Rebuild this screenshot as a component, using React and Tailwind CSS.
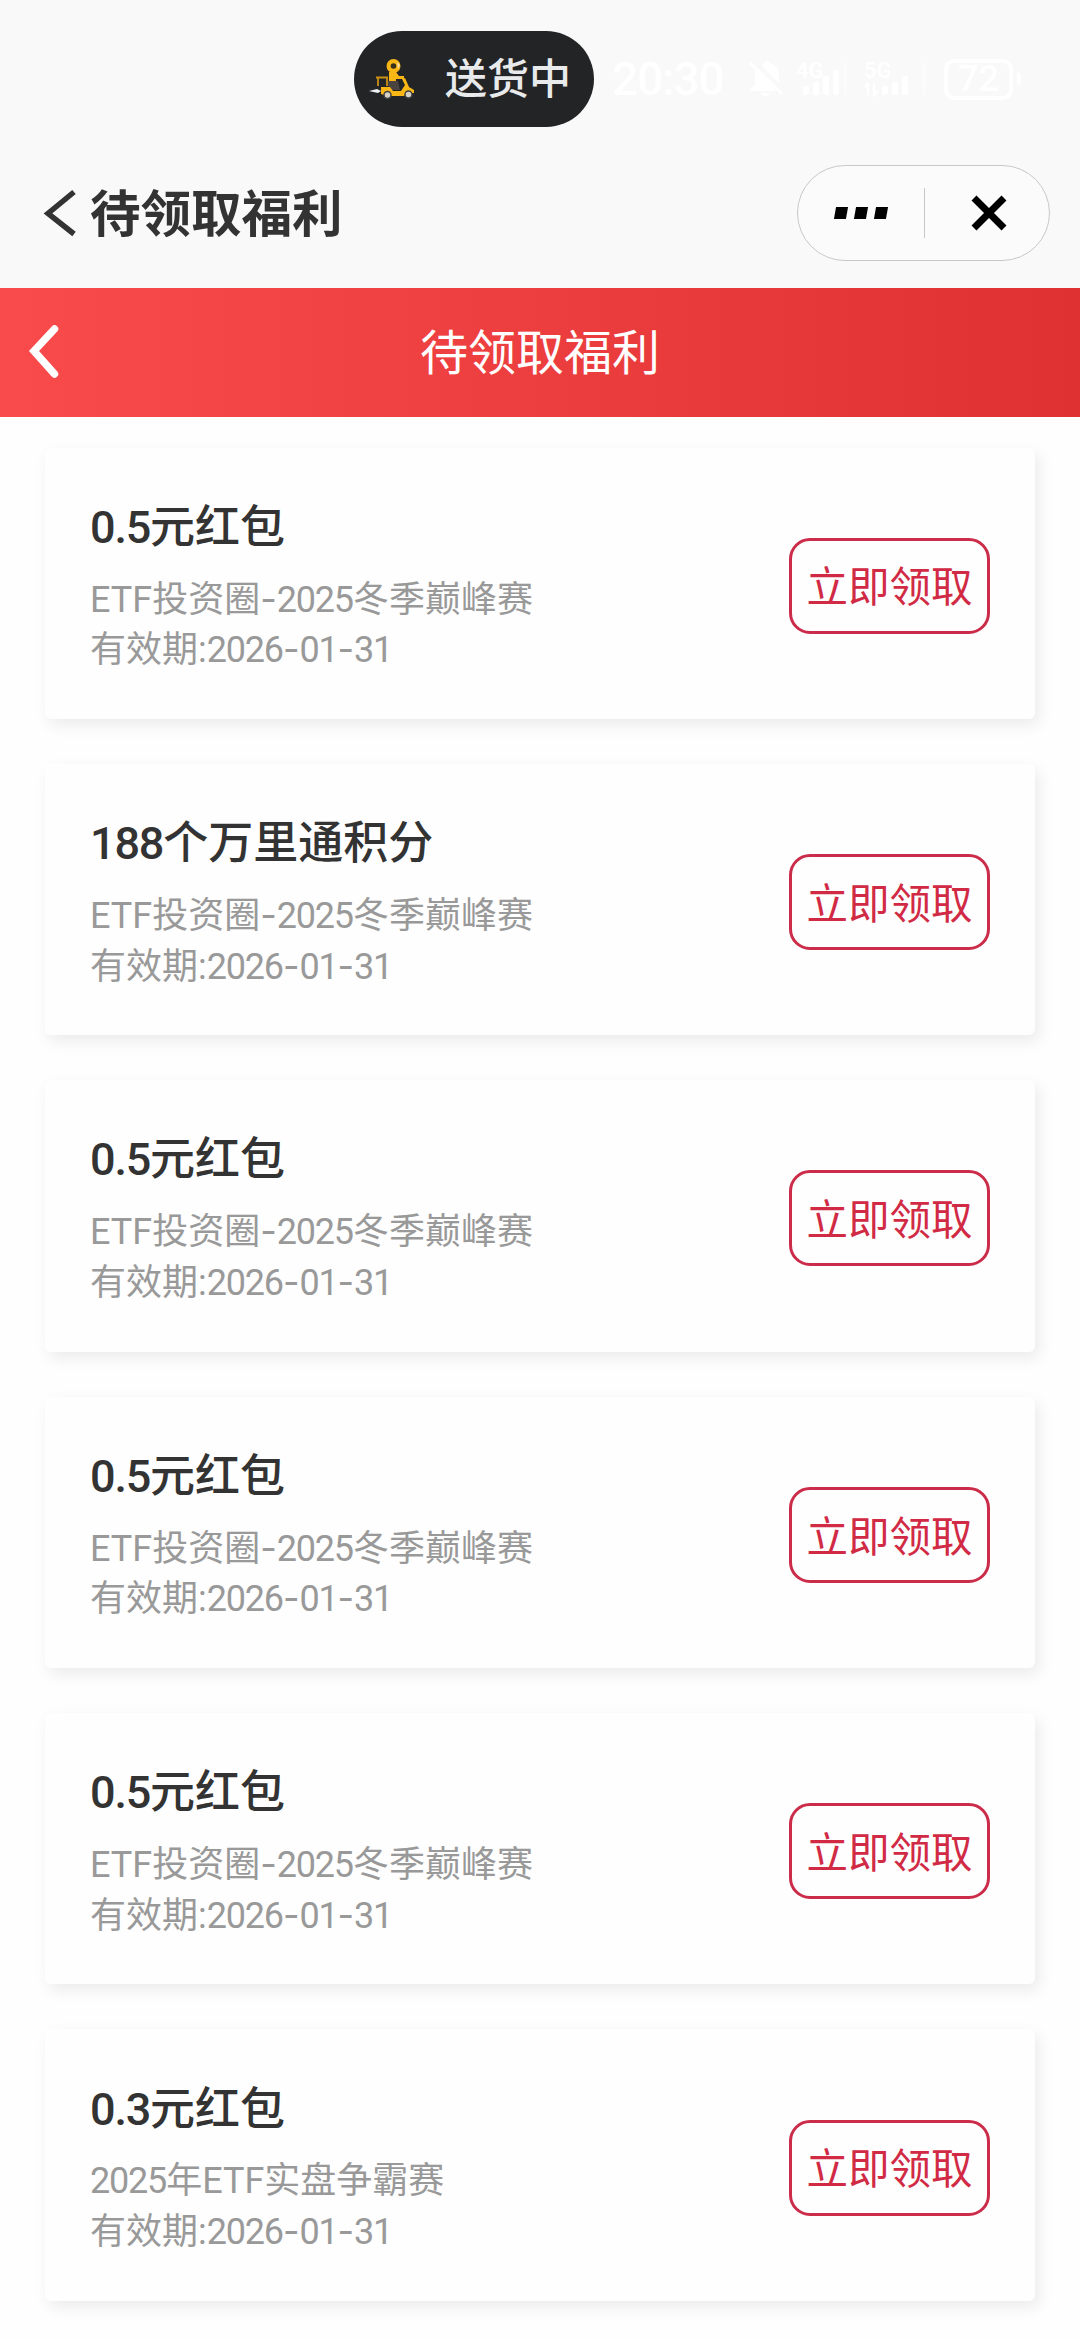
// App.jsx
import React from 'react';

const rewards = [
  { id: 1, title: '0.5元红包', source: 'ETF投资圈-2025冬季巅峰赛', date: '2026-01-31' },
  { id: 2, title: '188个万里通积分', source: 'ETF投资圈-2025冬季巅峰赛', date: '2026-01-31' },
  { id: 3, title: '0.5元红包', source: 'ETF投资圈-2025冬季巅峰赛', date: '2026-01-31' },
  { id: 4, title: '0.5元红包', source: 'ETF投资圈-2025冬季巅峰赛', date: '2026-01-31' },
  { id: 5, title: '0.5元红包', source: 'ETF投资圈-2025冬季巅峰赛', date: '2026-01-31' },
  { id: 6, title: '0.3元红包', source: '2025年ETF实盘争霸赛', date: '2026-01-31' },
];

// Digits are set a little tighter, hyphens a little wider than the rest
const MixedText = ({ children }) =>
  children.split(/([\d.]+|-)/).map((part, i) => {
    if (part === '-') {
      return (
        <span key={i} className="font-['Inter']">
          -
        </span>
      );
    }
    if (/^[\d.]+$/.test(part)) {
      return (
        <span key={i} className="tracking-[-1.200px]">
          {part}
        </span>
      );
    }
    return part;
  });

const CourierIcon = () => (
  <svg className="h-[56px] w-[64px]" viewBox="0 0 64 56" fill="none">
    <circle cx="31.500" cy="15" r="7" fill="#f9b716" />
    <circle cx="31.500" cy="15" r="2.800" fill="#3a2f1a" />
    <path d="M35 11l3 3-2 4z" fill="#f3dfb0" />
    <path d="M27 21h7l3 4h5v3h-8v3h-7z" fill="#f9b716" />
    <path d="M14 26.500h12M16 27v8M25 27v8" stroke="#c98f17" strokeWidth="1.800" />
    <path d="M26 30h10l2 9h-8l-4-4z" fill="#4a4440" />
    <path d="M19 36h9l3 4h8l4-6-3-6 3-1 4 9 5 3v3h-7l-3 3H25l-6-2z" fill="#f9b716" />
    <circle cx="25.500" cy="44" r="3.500" fill="#d9d2c4" stroke="#3e4044" strokeWidth="1.500" />
    <circle cx="46.500" cy="43.500" r="3.500" fill="#d9d2c4" stroke="#3e4044" strokeWidth="1.500" />
    <path d="M7 40l8-2 4 2-3 2z" fill="#eef2f5" />
  </svg>
);

const StatusBar = () => (
  <div className="flex h-[158px] items-center pl-[354px] text-white">
    <div className="flex h-[96px] w-[240px] items-center rounded-full bg-[#232426] pl-2">
      <CourierIcon />
      <span className="mt-[2px] ml-[19px] text-[42px] leading-none font-medium text-[#e8eaeb]">
        送货中
      </span>
    </div>
    <span className="ml-[18px] w-[114px] text-[46px] leading-none font-medium tracking-[-1px]">
      20:30
    </span>
    <svg className="ml-[22px] h-[40px] w-[38px]" viewBox="0 0 38 40" fill="currentColor">
      <path d="M13 6c2-1 3-2 4-2 0-3 5-3 5 0 6 1 9 6 9 12v8z" />
      <path d="M7 11l21 21H3v-3l4-4z" />
      <path d="M13 34h9c-1 4-8 4-9 0z" />
      <path d="M2 4l32 31" stroke="currentColor" strokeWidth="3" />
    </svg>
    <svg className="ml-[10px] h-[40px] w-[54px]" viewBox="0 0 54 40" fill="currentColor">
      <text x="0" y="19" fontSize="22" fontWeight="600">4G</text>
      <rect x="7" y="27" width="6" height="9" rx="2" />
      <rect x="17" y="23" width="6" height="13" rx="2" />
      <rect x="27" y="17" width="6" height="19" rx="2" />
      <rect x="37" y="11" width="6" height="25" rx="2" />
      <rect x="47" y="3" width="4" height="33" rx="2" opacity="0.4" />
    </svg>
    <svg className="ml-[14px] h-[40px] w-[66px]" viewBox="0 0 66 40" fill="currentColor">
      <text x="0" y="19" fontSize="22" fontWeight="600">5G</text>
      <path d="M4 24v12M4 24l-3 4M10 24v12l4-4" stroke="currentColor" strokeWidth="2.500" fill="none" />
      <rect x="18" y="27" width="6" height="9" rx="2" />
      <rect x="28" y="23" width="6" height="13" rx="2" />
      <rect x="38" y="17" width="6" height="19" rx="2" />
      <rect x="58" y="3" width="4" height="33" rx="2" opacity="0.4" />
    </svg>
    <div className="ml-[14px] flex h-[41px] w-[69px] items-center justify-center rounded-[10px] border-4 border-white text-[36px] leading-none font-medium">
      72
    </div>
    <div className="ml-1 h-[12px] w-[4px] rounded-r-full bg-white" />
  </div>
);

const NavBar = () => (
  <div className="flex h-[130px] items-center pr-[30px] pb-[20px] pl-[42px]">
    <svg className="h-[50px] w-[36px]" viewBox="0 0 36 50" fill="none">
      <path d="M32 4L6 25.500L32 46" stroke="#333" strokeWidth="5.500" />
    </svg>
    <h1 className="mt-[4px] ml-[12px] text-[50.500px] leading-none font-bold text-[#333]">
      待领取福利
    </h1>
    <div className="ml-auto flex h-[96px] w-[253px] items-center rounded-full border border-[#c8c8c8] bg-[#fbfbfb]">
      <div className="flex w-[126px] justify-center gap-[8px] pr-[1px]">
        <span className="h-[12px] w-[12px] -skew-x-10 bg-black" />
        <span className="h-[12px] w-[12px] -skew-x-10 bg-black" />
        <span className="h-[12px] w-[12px] -skew-x-10 bg-black" />
      </div>
      <div className="h-[50px] w-px bg-[#c8c8c8]" />
      <div className="flex flex-1 justify-center pl-[3px]">
        <svg className="h-[36px] w-[36px]" viewBox="0 0 36 36">
          <path d="M3 3l30 30M33 3L3 33" stroke="#000" strokeWidth="7" />
        </svg>
      </div>
    </div>
  </div>
);

const RewardCard = ({ reward }) => (
  <div className="flex h-[271.400px] items-center justify-between rounded-[6px] bg-[#fefefe] pr-[45px] pl-[45px] shadow-[4px_6px_16px_rgba(0,0,0,0.08)]">
    <div className="pt-[7px] text-[36px] leading-[49.500px] text-[#999]">
      <h2 className="mb-[17px] text-[45px] leading-[60px] font-medium text-[#333]">
        <MixedText>{reward.title}</MixedText>
      </h2>
      <p>
        <MixedText>{reward.source}</MixedText>
      </p>
      <p>
        有效期:<MixedText>{reward.date}</MixedText>
      </p>
    </div>
    <button className="mt-[5px] h-[96px] w-[201px] rounded-[21px] border-3 border-[#cb2c49] pt-[5px] text-[41.500px] leading-none whitespace-nowrap text-[#d12a45]">
      立即领取
    </button>
  </div>
);

const App = () => {
  return (
    <div className="h-[2340px] w-[1080px] overflow-hidden bg-[#fefefe] font-['Roboto','Noto_Sans_CJK_SC',sans-serif]">
      <div className="bg-[#f9f9f9]">
        <StatusBar />
        <NavBar />
      </div>

      <div className="grid h-[128.500px] grid-cols-[1fr_auto_1fr] items-center bg-linear-to-r/srgb from-[#f94b4b] to-[#df3131] text-white">
        <svg className="ml-[26px] h-[60px] w-[36px]" viewBox="0 0 36 60" fill="none">
          <path d="M28.500 7L8 29L28.500 52" stroke="#fff" strokeWidth="7.500" strokeLinecap="round" />
        </svg>
        <span className="mt-[3px] text-[48px] leading-none">待领取福利</span>
      </div>

      <div className="flex flex-col gap-[45px] px-[45px] pt-[31px]">
        {rewards.map((reward) => (
          <RewardCard key={reward.id} reward={reward} />
        ))}
      </div>
    </div>
  );
};

export default App;
